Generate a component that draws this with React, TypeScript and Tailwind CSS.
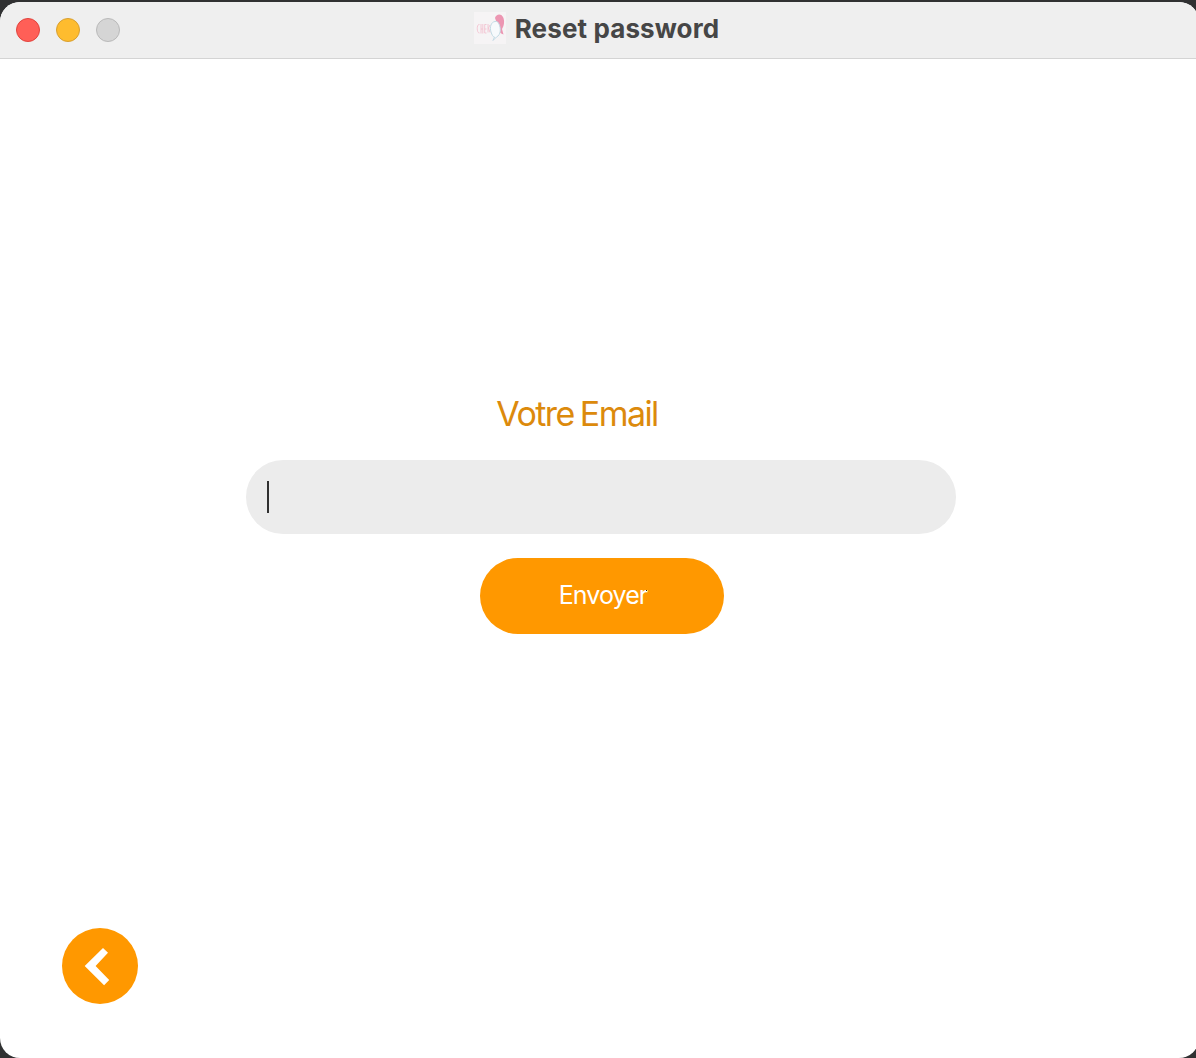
import React from "react";

function AppIcon() {
  return (
    <svg width="32" height="32" viewBox="0 0 32 32" className="shrink-0" aria-hidden="true">
      <rect width="32" height="32" fill="#f6f4f5" />
      <path d="M21 6C22 2 27 1 29 5C31 9 30 14 28 17L29.5 22.5C27 22 25 20 25 17Z" fill="#ec96b2" />
      <path
        d="M21 9.5C17 10 15.5 15 17 20C18 23 19 25 20.5 25L19 28.5L22.5 25C27 23 27 16 25 12C24 10 23 9 21 9.5Z"
        fill="#f7fafc"
        stroke="#c3dbe5"
        strokeWidth="1"
      />
      <path
        d="M5.5 12.5C2.5 11.500 2.5 21.500 5.5 21M7 12V21.500M7 17H8.800M8.800 12V21.500M12.500 12.500H10.700V21H12.500M10.700 17H12.500M14 12V20.500M16 13L14.500 16L16 20.500"
        fill="none"
        stroke="#f2bccc"
        strokeWidth="0.8"
      />
    </svg>
  );
}

function TitleBar() {
  return (
    <header className="grid h-[57px] shrink-0 grid-cols-[1fr_auto_1fr] border-b border-[#d4d4d4] bg-[#efefef] pr-[6px]">
      <div className="flex items-start gap-4 pt-4 pl-4">
        <span className="size-6 rounded-full border border-[#e0443e] bg-[#ff5f57]" />
        <span className="size-6 rounded-full border border-[#d79f31] bg-[#febc2e]" />
        <span className="size-6 rounded-full border border-[#b9b9b9] bg-[#d5d5d5]" />
      </div>
      <div className="flex items-start gap-[9px] pt-[10px]">
        <AppIcon />
        <h1 className="text-[26px] leading-[34px] font-bold tracking-[0.12px] whitespace-nowrap text-[#464646]">
          Reset password
        </h1>
      </div>
    </header>
  );
}

export default function App() {
  return (
    <div className="h-[1058px] w-[1196px] overflow-hidden bg-[#303132] pt-[2px] font-['Inter',sans-serif]">
      <div className="flex h-[1056px] w-[1199px] flex-col overflow-hidden rounded-[20px] bg-white">
        <TitleBar />
        <main className="flex flex-1 flex-col">
          <form className="mt-[335px] ml-[246px] flex w-[710px] flex-col items-center">
            <label className="mr-[48px] text-[34px] leading-10 tracking-[-1.55px] [word-spacing:-2px] whitespace-nowrap text-[#dc8a0c]">
              Votre Email
            </label>
            <div className="mt-[26px] flex h-[74px] w-full items-center rounded-full bg-[#ececec] pl-[21px]">
              <span className="h-8 w-[2px] bg-[#303030]" />
            </div>
            <button
              type="button"
              className="mt-6 ml-[2px] flex h-[76px] w-[244px] items-center justify-center rounded-full bg-[#ff9800] pl-[2px] text-[25px] tracking-[-0.9px] text-white"
            >
              <span className="relative">
                Envoyer
                <span className="absolute top-[13px] right-0 size-px bg-[#302000]" />
              </span>
            </button>
          </form>
          <button
            type="button"
            aria-label="Retour"
            className="mt-auto mb-[54px] ml-[62px] size-[76px] rounded-full bg-[#ff9800]"
          >
            <svg width="76" height="76" viewBox="0 0 76 76" fill="white">
              <path d="M41 20L46 24.800L33.600 38L47.200 52L42.100 57.300L22.700 38Z" />
            </svg>
          </button>
        </main>
      </div>
    </div>
  );
}
